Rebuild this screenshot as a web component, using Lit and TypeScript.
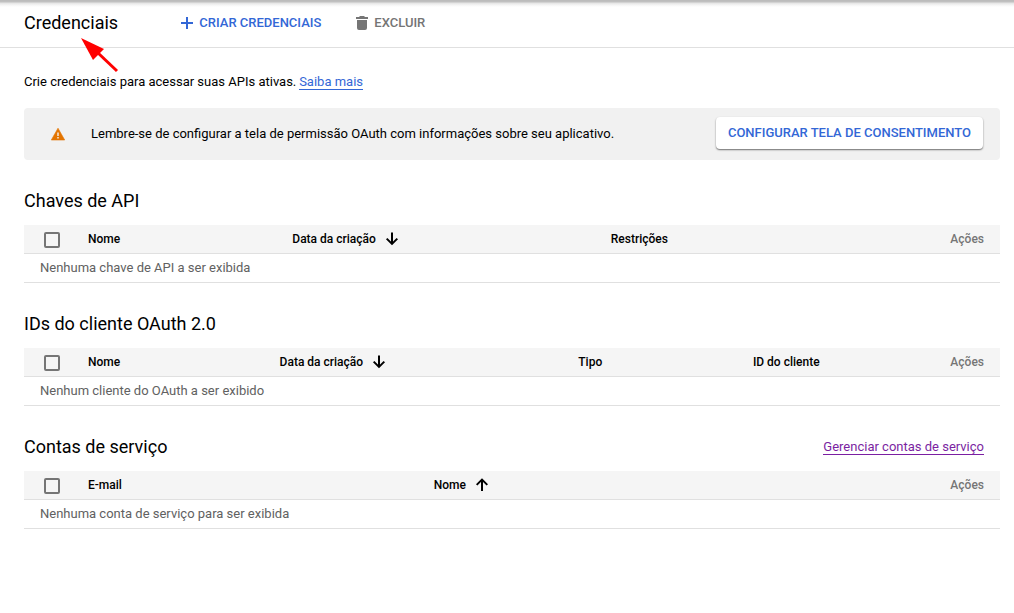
import { LitElement, html, css, svg, nothing } from "lit";
import { customElement, property } from "lit/decorators.js";

interface Column {
  label: string;
  sort?: "up" | "down";
}

const arrowDown = svg`<path d="M8 1.5V13M2.7 7.6L8 12.9L13.3 7.6" />`;
const arrowUp = svg`<path d="M8 14V2.5M2.7 7.9L8 2.6L13.3 7.9" />`;

@customElement("credential-section")
export class CredentialSection extends LitElement {
  @property() heading = "";
  @property() empty = "";
  @property() link = "";
  @property() tracks = "";
  @property({ attribute: false }) columns: Column[] = [];

  static styles = css`
    :host { display: block; height: 123px; }
    .top { display: flex; height: 48px; box-sizing: border-box; padding: 12px 16px 0 0; justify-content: space-between; }
    .heading { margin: 0; font-size: 18px; line-height: 24px; font-weight: 400; color: #000; }
    .link { height: 16px; margin-top: 3px; font-size: 13px; line-height: 18px; color: #7b1fa2; border-bottom: 1px solid #7b1fa2; }
    .head { display: grid; height: 28px; background: #f5f5f5; border-bottom: 1px solid #e0e0e0; font-size: 12px; line-height: 28px; font-weight: 500; color: #000; }
    .cell { display: flex; white-space: nowrap; }
    .actions { justify-content: flex-end; padding-right: 16px; color: #757575; }
    .box { width: 12px; height: 12px; margin: 7px 0 0 20px; border: 2px solid #757575; border-radius: 2px; }
    .arrow { width: 16px; height: 16px; margin: 6px 0 0 8px; fill: none; stroke: #000; stroke-width: 2; }
    .row { height: 28px; padding-left: 16px; border-bottom: 1px solid #e0e0e0; font-size: 13px; line-height: 28px; color: #616161; }
  `;

  render() {
    return html`
      <div class="top">
        <h2 class="heading">${this.heading}</h2>
        ${this.link ? html`<a class="link">${this.link}</a>` : nothing}
      </div>
      <div class="head" style="grid-template-columns: ${this.tracks}">
        <div class="box"></div>
        ${this.columns.map(
          (c) => html`<div class="cell">
            ${c.label}${c.sort
              ? html`<svg class="arrow" viewBox="0 0 16 16">${c.sort === "up" ? arrowUp : arrowDown}</svg>`
              : nothing}
          </div>`
        )}
        <div class="cell actions">Ações</div>
      </div>
      <div class="row">${this.empty}</div>
    `;
  }
}

@customElement("app-root")
export class AppRoot extends LitElement {
  static styles = css`
    :host { display: block; position: relative; height: 613px; overflow: hidden; background: #fff; font-family: Roboto, sans-serif; color: #000; }
    .shade { position: absolute; top: 0; left: 0; right: 0; height: 7px; background: linear-gradient(#bababa 0, #c2c2c2 2px, #e4e4e4 3px, #f5f5f5 5px, #fff 7px); }
    .toolbar { display: flex; height: 47px; padding-left: 24px; border-bottom: 1px solid #e0e0e0; line-height: 46px; }
    .title { margin: 0; width: 155px; font-size: 18px; font-weight: 400; }
    .action { display: flex; font-size: 13px; font-weight: 500; color: #3367d6; }
    .create { width: 175px; }
    .label { padding-left: 0.3px; }
    .disabled { color: #757575; }
    .icon { width: 16px; height: 16px; margin: 15px 4px 0 0; fill: currentColor; }
    .pointer { position: absolute; left: 78px; top: 34px; width: 44px; height: 42px; }
    .content { padding: 24px 14px 0 24px; }
    .intro { margin: 0; height: 36px; font-size: 13px; line-height: 20px; }
    .learn { display: inline-block; height: 16px; margin-left: -0.4px; line-height: 18px; color: #3367d6; border-bottom: 1px solid #3367d6; }
    .banner { display: flex; height: 52px; background: #f1f1f1; border-radius: 4px; }
    .warning { width: 16px; height: 16px; margin: 18px 25px 0 26px; }
    .message { flex: 1; font-size: 13px; line-height: 52px; }
    .configure { height: 32px; margin: 9px 17px 0 0; padding: 0 12px; border: 0; border-radius: 4px; background: #fff; font: 500 13px/32px Roboto, sans-serif; color: #3367d6; box-shadow: 0 1px 2px rgba(0, 0, 0, 0.4), 0 1px 1px rgba(0, 0, 0, 0.2); }
    .sections { padding-top: 17px; }
  `;

  render() {
    return html`
      <header class="toolbar">
        <h1 class="title">Credenciais</h1>
        <div class="action create">
          <svg class="icon" viewBox="0 0 16 16"><path d="M7 2h2v5h5v2H9v5H7V9H2V7h5z" /></svg>
          <span class="label">CRIAR CREDENCIAIS</span>
        </div>
        <div class="action disabled">
          <svg class="icon" viewBox="0 0 16 16"><path d="M2 2h3l1-1h4l1 1h3v2H2zM3 5h10v8q0 2-2 2H5q-2 0-2-2z" /></svg>
          <span class="label">EXCLUIR</span>
        </div>
      </header>
      <main class="content">
        <p class="intro">Crie credenciais para acessar suas APIs ativas. <a class="learn">Saiba mais</a></p>
        <div class="banner">
          <svg class="warning" viewBox="0 0 16 16">
            <path fill="#e37400" d="M8 2.2L14.7 14H1.3z" stroke="#e37400" stroke-width=".6" stroke-linejoin="round" />
            <path fill="#f1f1f1" d="M7.3 6.5h1.4v3.5H7.3zM7.3 11h1.4v1.4H7.3z" />
          </svg>
          <div class="message">Lembre-se de configurar a tela de permissão OAuth com informações sobre seu aplicativo.</div>
          <button class="configure">CONFIGURAR TELA DE CONSENTIMENTO</button>
        </div>
        <div class="sections">
          <credential-section
            heading="Chaves de API"
            empty="Nenhuma chave de API a ser exibida"
            tracks="64px 204.3px 318.5px 1fr auto"
            .columns=${[{ label: "Nome" }, { label: "Data da criação", sort: "down" }, { label: "Restrições" }]}
          ></credential-section>
          <credential-section
            heading="IDs do cliente OAuth 2.0"
            empty="Nenhum cliente do OAuth a ser exibido"
            tracks="64px 191.6px 298.7px 174.6px 1fr auto"
            .columns=${[{ label: "Nome" }, { label: "Data da criação", sort: "down" }, { label: "Tipo" }, { label: "ID do cliente" }]}
          ></credential-section>
          <credential-section
            heading="Contas de serviço"
            empty="Nenhuma conta de serviço para ser exibida"
            link="Gerenciar contas de serviço"
            tracks="64px 345.7px 1fr auto"
            .columns=${[{ label: "E-mail" }, { label: "Nome", sort: "up" }]}
          ></credential-section>
        </div>
      </main>
      <div class="shade"></div>
      <svg class="pointer" viewBox="78 34 44 42">
        <path d="M97 52L117 71" stroke="#f00" stroke-width="3" />
        <path d="M81 38L104 49L93 60z" fill="#f00" />
      </svg>
    `;
  }
}
